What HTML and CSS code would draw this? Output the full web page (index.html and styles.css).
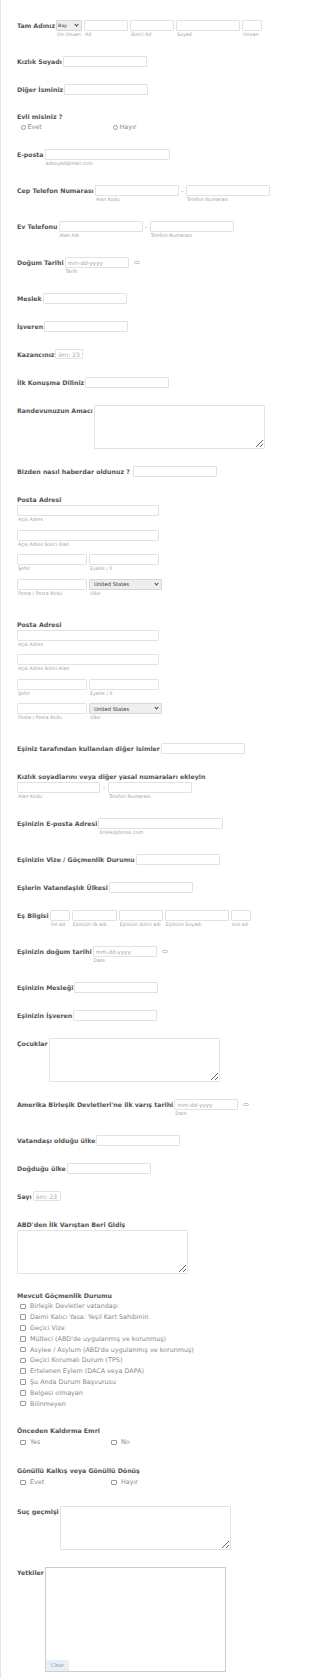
FILE: index.html
```html
<!DOCTYPE html>
<html lang="tr">
<head>
  <meta charset="UTF-8" />
  <meta name="viewport" content="width=device-width, initial-scale=1.0"/>
  <title>Göçmenlik Başvuru Formu</title>
  <link rel="stylesheet" href="styles.css">
</head>
<body>

<div class="form">
  <ul class="fields">

    <li class="field">
      <label class="q">Tam Adınız</label>
      <div class="parts">
        <div class="part">
          <div class="sel-wrap w26">
            <select class="sel">
              <option>Bay.</option>
              <option>Bayan</option>
              <option>Dr.</option>
            </select>
          </div>
          <span class="sub">Ön Unvan</span>
        </div>
        <div class="part"><input class="inp w44" type="text"><span class="sub">Ad</span></div>
        <div class="part"><input class="inp w44" type="text"><span class="sub">İkinci Ad</span></div>
        <div class="part"><input class="inp w64" type="text"><span class="sub">Soyad</span></div>
        <div class="part"><input class="inp w20" type="text"><span class="sub">Unvan</span></div>
      </div>
    </li>

    <li class="field">
      <label class="q">Kızlık Soyadı</label>
      <input class="inp" type="text">
    </li>

    <li class="field">
      <label class="q">Diğer İsminiz</label>
      <input class="inp" type="text">
    </li>

    <li class="field stack">
      <label class="q short">Evli misiniz ?</label>
      <div class="opts radios">
        <label class="opt"><input type="radio" name="evli"> Evet</label>
        <label class="opt"><input type="radio" name="evli"> Hayır</label>
      </div>
    </li>

    <li class="field">
      <label class="q">E-posta</label>
      <div class="part">
        <input class="inp w125" type="email">
        <span class="sub">adsoyad@mail.com</span>
      </div>
    </li>

    <li class="field">
      <label class="q">Cep Telefon Numarası</label>
      <div class="parts phone">
        <div class="part"><input class="inp" type="tel"><span class="sub">Alan Kodu</span></div>
        <span class="dash">-</span>
        <div class="part"><input class="inp" type="tel"><span class="sub">Telefon Numarası</span></div>
      </div>
    </li>

    <li class="field">
      <label class="q">Ev Telefonu</label>
      <div class="parts phone">
        <div class="part"><input class="inp" type="tel"><span class="sub">Alan Adı</span></div>
        <span class="dash">-</span>
        <div class="part"><input class="inp" type="tel"><span class="sub">Telefon Numarası</span></div>
      </div>
    </li>

    <li class="field">
      <label class="q">Doğum Tarihi</label>
      <div class="part">
        <div class="date">
          <input class="inp w64" type="text" placeholder="mm-dd-yyyy">
          <svg class="cal" width="6" height="3" viewBox="0 0 6 3"><rect x="0.5" y="0.5" width="5" height="2" rx="1" fill="none" stroke="#b5b5b5" stroke-width="0.8"/></svg>
        </div>
        <span class="sub">Tarih</span>
      </div>
    </li>

    <li class="field">
      <label class="q">Meslek</label>
      <input class="inp" type="text">
    </li>

    <li class="field">
      <label class="q">İşveren</label>
      <input class="inp" type="text">
    </li>

    <li class="field">
      <label class="q">Kazancınız</label>
      <input class="inp num" type="number" placeholder="örn: 23">
    </li>

    <li class="field">
      <label class="q">İlk Konuşma Diliniz</label>
      <input class="inp" type="text">
    </li>

    <li class="field">
      <label class="q">Randevunuzun Amacı</label>
      <textarea class="area"></textarea>
    </li>

    <li class="field">
      <label class="q">Bizden nasıl haberdar oldunuz ?&nbsp;</label>
      <input class="inp" type="text">
    </li>

    <li class="field stack addr-field">
      <label class="q">Posta Adresi</label>
      <div class="addr">
        <div class="part"><input class="inp w142" type="text"><span class="sub">Açık Adres</span></div>
        <div class="part"><input class="inp w142" type="text"><span class="sub">Açık Adres İkinci Alan</span></div>
        <div class="parts">
          <div class="part"><input class="inp w70" type="text"><span class="sub">Şehir</span></div>
          <div class="part"><input class="inp w70" type="text"><span class="sub">Eyalet / İl</span></div>
        </div>
        <div class="parts">
          <div class="part"><input class="inp w70" type="text"><span class="sub">Posta / Posta Kodu</span></div>
          <div class="part">
            <div class="sel-wrap w73">
              <select class="sel country">
                <option>United States</option>
                <option>Türkiye</option>
              </select>
            </div>
            <span class="sub">Ülke</span>
          </div>
        </div>
      </div>
    </li>

    <li class="field stack addr-field">
      <label class="q">Posta Adresi</label>
      <div class="addr">
        <div class="part"><input class="inp w142" type="text"><span class="sub">Açık Adres</span></div>
        <div class="part"><input class="inp w142" type="text"><span class="sub">Açık Adres İkinci Alan</span></div>
        <div class="parts">
          <div class="part"><input class="inp w70" type="text"><span class="sub">Şehir</span></div>
          <div class="part"><input class="inp w70" type="text"><span class="sub">Eyalet / İl</span></div>
        </div>
        <div class="parts">
          <div class="part"><input class="inp w70" type="text"><span class="sub">Posta / Posta Kodu</span></div>
          <div class="part">
            <div class="sel-wrap w73">
              <select class="sel country">
                <option>United States</option>
                <option>Türkiye</option>
              </select>
            </div>
            <span class="sub">Ülke</span>
          </div>
        </div>
      </div>
    </li>

    <li class="field">
      <label class="q">Eşiniz tarafından kullanılan diğer isimler</label>
      <input class="inp" type="text">
    </li>

    <li class="field stack">
      <label class="q">Kızlık soyadlarını veya diğer yasal numaraları ekleyin</label>
      <div class="parts phone wide-dash">
        <div class="part"><input class="inp w83" type="text"><span class="sub">Alan Kodu</span></div>
        <span class="dash">-</span>
        <div class="part"><input class="inp" type="text"><span class="sub">Telefon Numarası</span></div>
      </div>
    </li>

    <li class="field">
      <label class="q">Eşinizin E-posta Adresi</label>
      <div class="part">
        <input class="inp w125" type="email">
        <span class="sub">örnek@örnek.com</span>
      </div>
    </li>

    <li class="field">
      <label class="q">Eşinizin Vize / Göçmenlik Durumu</label>
      <input class="inp" type="text">
    </li>

    <li class="field">
      <label class="q">Eşlerin Vatandaşlık Ülkesi</label>
      <input class="inp" type="text">
    </li>

    <li class="field">
      <label class="q">Eş Bilgisi</label>
      <div class="parts">
        <div class="part"><input class="inp w20" type="text"><span class="sub">Ön ad</span></div>
        <div class="part"><input class="inp w45" type="text"><span class="sub">Eşinizin ilk adı</span></div>
        <div class="part"><input class="inp w44" type="text"><span class="sub">Eşinizin ikinci adı</span></div>
        <div class="part"><input class="inp w64" type="text"><span class="sub">Eşinizin Soyadı</span></div>
        <div class="part"><input class="inp w20" type="text"><span class="sub">son ad</span></div>
      </div>
    </li>

    <li class="field">
      <label class="q">Eşinizin doğum tarihi</label>
      <div class="part">
        <div class="date">
          <input class="inp w64" type="text" placeholder="mm-dd-yyyy">
          <svg class="cal" width="6" height="3" viewBox="0 0 6 3"><rect x="0.5" y="0.5" width="5" height="2" rx="1" fill="none" stroke="#b5b5b5" stroke-width="0.8"/></svg>
        </div>
        <span class="sub">Date</span>
      </div>
    </li>

    <li class="field">
      <label class="q">Eşinizin Mesleği</label>
      <input class="inp" type="text">
    </li>

    <li class="field">
      <label class="q">Eşinizin İşveren</label>
      <input class="inp" type="text">
    </li>

    <li class="field">
      <label class="q">Çocuklar</label>
      <textarea class="area"></textarea>
    </li>

    <li class="field">
      <label class="q">Amerika Birleşik Devletleri'ne ilk varış tarihi</label>
      <div class="part">
        <div class="date">
          <input class="inp w64" type="text" placeholder="mm-dd-yyyy">
          <svg class="cal" width="6" height="3" viewBox="0 0 6 3"><rect x="0.5" y="0.5" width="5" height="2" rx="1" fill="none" stroke="#b5b5b5" stroke-width="0.8"/></svg>
        </div>
        <span class="sub">Date</span>
      </div>
    </li>

    <li class="field">
      <label class="q">Vatandaşı olduğu ülke</label>
      <input class="inp" type="text">
    </li>

    <li class="field">
      <label class="q">Doğduğu ülke</label>
      <input class="inp" type="text">
    </li>

    <li class="field">
      <label class="q">Sayı</label>
      <input class="inp num" type="number" placeholder="örn: 23">
    </li>

    <li class="field stack">
      <label class="q">ABD'den İlk Varıştan Beri Gidiş</label>
      <textarea class="area"></textarea>
    </li>

    <li class="field stack">
      <label class="q short">Mevcut Göçmenlik Durumu</label>
      <div class="checklist">
        <label class="chk"><input type="checkbox"> Birleşik Devletler vatandaşı</label>
        <label class="chk"><input type="checkbox"> Daimi Kalıcı Yasa: Yeşil Kart Sahibinin</label>
        <label class="chk"><input type="checkbox"> Geçici Vize</label>
        <label class="chk"><input type="checkbox"> Mülteci (ABD'de uygulanmış ve korunmuş)</label>
        <label class="chk"><input type="checkbox"> Asylee / Asylum (ABD'de uygulanmış ve korunmuş)</label>
        <label class="chk"><input type="checkbox"> Geçici Korumalı Durum (TPS)</label>
        <label class="chk"><input type="checkbox"> Ertelenen Eylem (DACA veya DAPA)</label>
        <label class="chk"><input type="checkbox"> Şu Anda Durum Başvurusu</label>
        <label class="chk"><input type="checkbox"> Belgesi olmayan</label>
        <label class="chk"><input type="checkbox"> Bilinmeyen</label>
      </div>
    </li>

    <li class="field stack">
      <label class="q short">Önceden Kaldırma Emri</label>
      <div class="opts checks">
        <label class="opt"><input type="checkbox"> Yes</label>
        <label class="opt"><input type="checkbox"> No</label>
      </div>
    </li>

    <li class="field stack">
      <label class="q short">Gönüllü Kalkış veya Gönüllü Dönüş</label>
      <div class="opts checks">
        <label class="opt"><input type="checkbox"> Evet</label>
        <label class="opt"><input type="checkbox"> Hayır</label>
      </div>
    </li>

    <li class="field">
      <label class="q">Suç geçmişi</label>
      <textarea class="area"></textarea>
    </li>

    <li class="field">
      <label class="q">Yetkiler</label>
      <div class="sig">
        <button class="clear" type="button">Clear</button>
      </div>
    </li>

  </ul>
</div>

</body>
</html>
```

FILE: styles.css
```css
body {
  margin: 0;
  font-family: "DejaVu Sans", Verdana, sans-serif;
  background: #fff;
}
.form {
  min-height: 1678px;
  box-sizing: border-box;
  border-left: 1px solid #e6e6e6;
  padding: 20px 0 0 16px;
}
.fields {
  list-style: none;
  margin: 0;
  padding: 0;
}
.field {
  display: flex;
  align-items: flex-start;
  margin-bottom: 17px;
}
.field.stack {
  display: block;
}
.addr-field {
  margin-bottom: 21px;
}
.q {
  font-size: 6.25px;
  font-weight: bold;
  line-height: 11px;
  color: #555;
  white-space: nowrap;
  margin-right: 1px;
}
.stack > .q {
  display: block;
}
.stack > .q.short {
  line-height: 10px;
}

/* inputs */
.inp {
  display: block;
  box-sizing: border-box;
  width: 84px;
  height: 11px;
  margin: 0;
  padding: 0 2px;
  border: 1px solid #e2e2e2;
  border-radius: 1px;
  background: #fff;
  font: 5.6px "DejaVu Sans", sans-serif;
  color: #555;
  outline: none;
}
.inp::placeholder {
  color: #a8a8a8;
}
.num {
  width: 28px;
  height: 10px;
  font-size: 6px;
  -moz-appearance: textfield;
}
.num::-webkit-inner-spin-button,
.num::-webkit-outer-spin-button {
  -webkit-appearance: none;
  margin: 0;
}
.w20 { width: 20px; }
.w44 { width: 44px; }
.w45 { width: 45px; }
.w64 { width: 64px; }
.w70 { width: 70px; }
.w83 { width: 83px; }
.w125 { width: 125px; }
.w142 { width: 142px; }

.parts {
  display: flex;
  gap: 2px;
}
.parts.phone {
  gap: 0;
}
.part {
  display: block;
}
.sub {
  display: block;
  width: 0;
  white-space: nowrap;
  font-size: 4.8px;
  line-height: 8px;
  color: #a3a3a3;
  padding-left: 1px;
}
.dash {
  width: 7px;
  text-align: center;
  font-size: 6px;
  line-height: 11px;
  color: #888;
}
.wide-dash .dash {
  width: 8px;
}

/* selects */
.sel-wrap {
  position: relative;
  box-sizing: border-box;
  height: 11px;
  border: 1px solid #d6d6d6;
  border-radius: 1px;
  background: #eee;
}
.sel-wrap::after {
  content: "";
  position: absolute;
  right: 3px;
  top: 2px;
  width: 2px;
  height: 2px;
  border-right: 1px solid #444;
  border-bottom: 1px solid #444;
  transform: rotate(45deg);
  pointer-events: none;
}
.w26 { width: 26px; }
.w73 { width: 73px; }
.sel {
  -webkit-appearance: none;
  appearance: none;
  display: block;
  width: 100%;
  height: 9px;
  margin: 0;
  padding: 0 0 0 1px;
  border: none;
  background: transparent;
  font: 4.6px "DejaVu Sans", sans-serif;
  color: #333;
  outline: none;
}
.sel.country {
  font-size: 5.2px;
  color: #333;
  padding-left: 4px;
}

/* date */
.date {
  display: flex;
  align-items: center;
}
.cal {
  display: block;
  margin-left: 5px;
}

/* textarea */
.area {
  display: block;
  box-sizing: border-box;
  width: 171px;
  height: 44px;
  margin: 0;
  border: 1px solid #e2e2e2;
  border-radius: 1px;
  font: 6px "DejaVu Sans", sans-serif;
}

/* address */
.addr {
  display: flex;
  flex-direction: column;
  gap: 5.5px;
}

/* radios and checkboxes */
.opts {
  display: flex;
  padding-left: 4px;
}
.opt {
  display: flex;
  align-items: center;
  width: 92px;
  height: 10px;
  font-size: 6.4px;
  color: #8a8a8a;
  white-space: nowrap;
}
.opts.checks {
  padding-left: 3px;
}
.opts.checks .opt {
  width: 91px;
  height: 13px;
}
.opt input,
.chk input {
  -webkit-appearance: none;
  appearance: none;
  box-sizing: border-box;
  width: 5px;
  height: 5px;
  margin: 0 1.5px 0 0;
  border: 1px solid #9a9a9a;
  background: #fff;
}
.radios input {
  border-radius: 50%;
}
.opts.checks input,
.chk input {
  width: 5.5px;
  height: 5.5px;
  border-radius: 1px;
  margin-right: 4.5px;
}
.checklist {
  padding-left: 3px;
}
.chk {
  display: flex;
  align-items: center;
  height: 10.8px;
  font-size: 6.4px;
  color: #8a8a8a;
  white-space: nowrap;
}

/* signature */
.sig {
  display: flex;
  align-items: flex-end;
  box-sizing: border-box;
  width: 181px;
  height: 105px;
  border: 1px solid #cdcdcd;
}
.clear {
  width: 23px;
  height: 11px;
  padding: 0;
  border: none;
  border-radius: 1px;
  background: #e7eff8;
  color: #8e9fb6;
  font: 5.2px "DejaVu Sans", sans-serif;
  cursor: pointer;
}
```
